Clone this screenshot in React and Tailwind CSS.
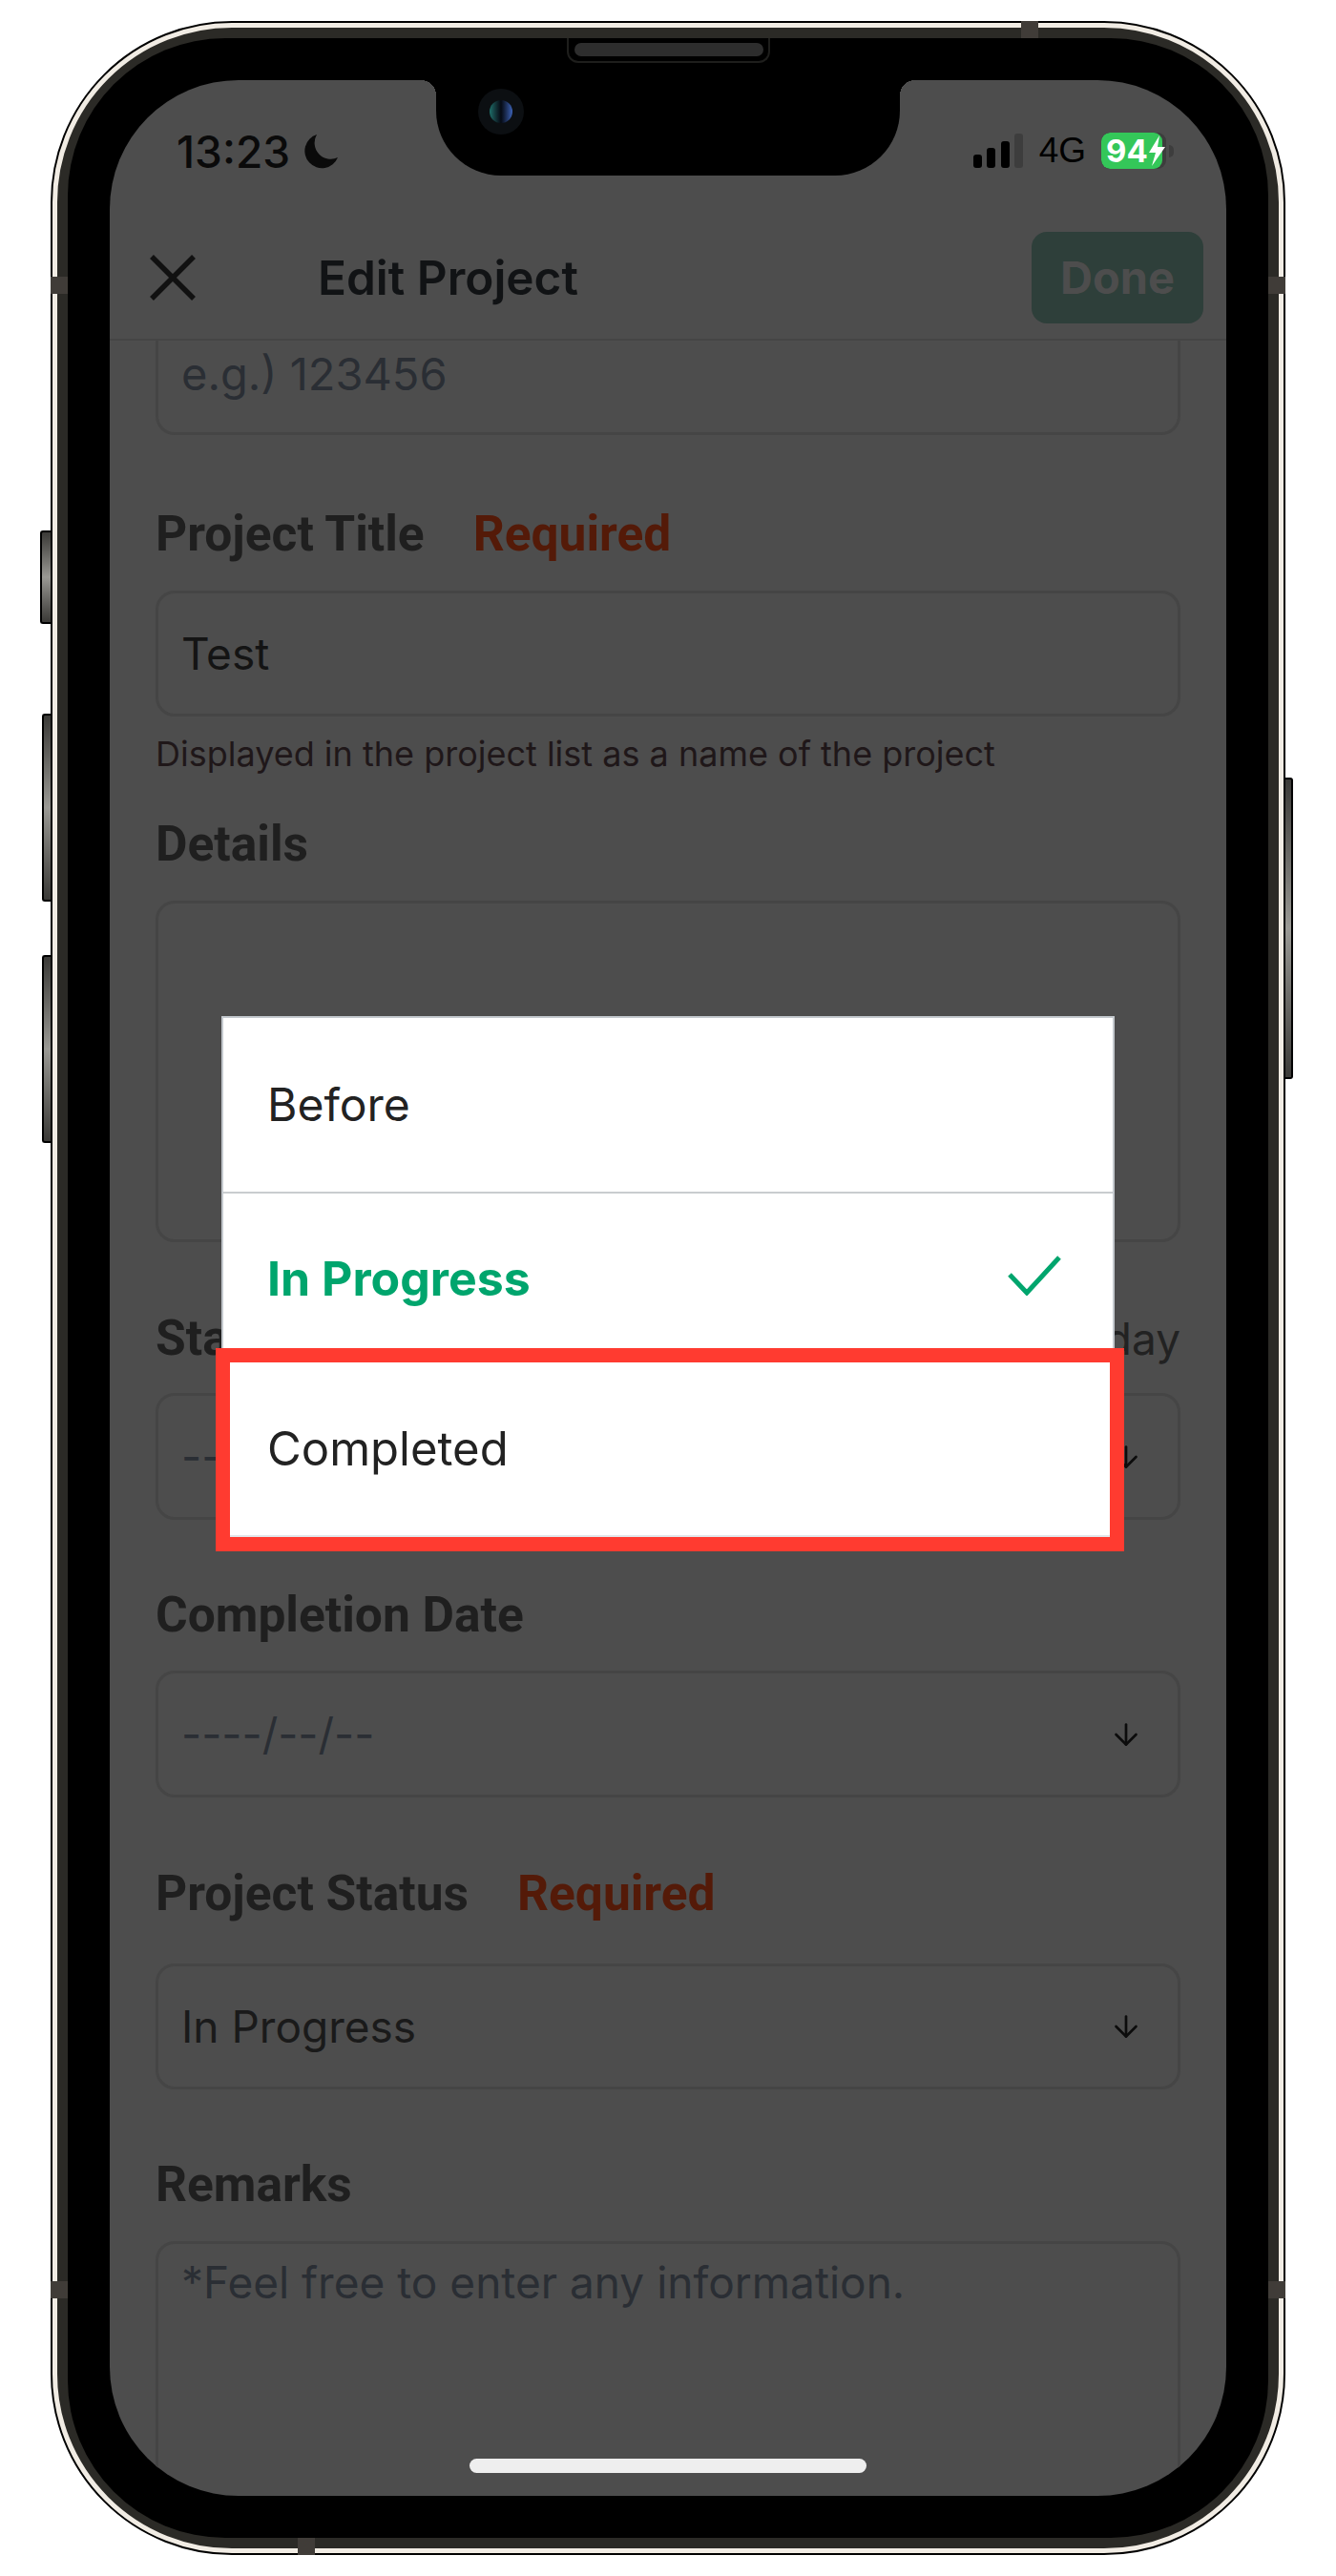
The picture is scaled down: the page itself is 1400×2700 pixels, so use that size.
import { ArrowDown } from 'lucide-react';

const SANS = 'font-["Inter",sans-serif]';

const Field = ({ label, required, right, help, boxClass, children, labelClass, gapClass = 'mt-[31px]' }) => (
  <div>
    <div className={`flex items-baseline justify-between ${labelClass}`}>
      <div className='flex items-baseline gap-[51px] font-["Roboto",sans-serif]'>
        <span className="text-[51.5px] leading-[56px] font-bold text-[#1f1f1f]">{label}</span>
        {required && <span className="text-[51.5px] leading-[56px] font-bold text-[#541a08]">Required</span>}
      </div>
      {right && <span className={`text-[46px] leading-[56px] text-[#222] ${SANS}`}>{right}</span>}
    </div>
    <div className={`${gapClass} flex items-center justify-between rounded-[20px] border-[3px] border-[#454545] pl-[24px] pr-[24px] ${boxClass}`}>
      {children}
    </div>
    {help && <p className={`mt-[17px] text-[36px] leading-[44px] text-[#1f1719] ${SANS}`}>{help}</p>}
  </div>
);

const SideButton = ({ className }) => (
  <div className={`rounded-l-[3px] border-2 border-r-0 border-black bg-gradient-to-b from-[#3b3a37] via-[#9a9994] to-[#3b3a37] ${className}`} />
);

const Chevron = () => <ArrowDown size={36} strokeWidth={1.8} className="mr-[12px] text-[#0c0c0c]" />;

export default function App() {
  return (
    <div className="flex h-[2700px] w-[1400px] justify-start bg-white pt-[22px] pl-[53px]">
      {/* volume / silent buttons */}
      <div className="ml-[-11px] flex w-[11px] flex-col items-end">
        <SideButton className="mt-[534px] h-[98px] w-[11px]" />
        <SideButton className="mt-[94px] h-[197px] w-[9px]" />
        <SideButton className="mt-[56px] h-[197px] w-[9px]" />
      </div>

      <div className="relative h-[2656px] w-[1294px] rounded-[190px] border-2 border-black bg-[#2b2a26]">
        {/* antenna bands */}
        <div className="absolute left-[-2px] top-[266px] h-[18px] w-[18px] bg-[#403c38]" />
        <div className="absolute right-[-2px] top-[266px] h-[18px] w-[18px] bg-[#403c38]" />
        <div className="absolute left-[-2px] top-[2367px] h-[18px] w-[18px] bg-[#403c38]" />
        <div className="absolute right-[-2px] top-[2367px] h-[18px] w-[18px] bg-[#403c38]" />
        <div className="absolute left-[1015px] top-[-2px] h-[18px] w-[18px] bg-[#403c38]" />
        <div className="absolute bottom-[-2px] left-[257px] h-[18px] w-[18px] bg-[#403c38]" />

        <div className="h-full w-full rounded-[188px] border-[5px] border-[#f1ece4] bg-[#2b2a26] p-[11px]">
          <div className="relative h-full w-full rounded-[165px] bg-black px-[44px] py-[44px]">
            {/* speaker */}
            <div className="absolute left-[523px] top-0 flex h-[26px] w-[213px] items-center justify-center rounded-b-[12px] border-2 border-t-0 border-[#1e1e1c] bg-black">
              <div className="h-[14px] w-[198px] rounded-full bg-[#2d2d2d]" />
            </div>

            <div className="relative flex h-[2532px] w-[1170px] flex-col overflow-hidden rounded-[135px] bg-[#4d4d4d]">
              {/* notch */}
              <div className="absolute left-[342px] top-0 h-[100px] w-[486px] rounded-b-[68px] bg-black" />
              <div className="absolute left-[326px] top-0 h-[16px] w-[16px] bg-[radial-gradient(circle_at_0_100%,transparent_16px,black_16px)]" />
              <div className="absolute left-[828px] top-0 h-[16px] w-[16px] bg-[radial-gradient(circle_at_100%_100%,transparent_16px,black_16px)]" />
              <div className="absolute left-[386px] top-[9px] h-[48px] w-[48px] rounded-full bg-[#0c0f12] p-[12px]">
                <div className="h-full w-full rounded-full bg-gradient-to-r from-[#1d6f6a] via-[#060a14] to-[#3d63b8]" />
              </div>

              {/* status bar */}
              <div className={`flex h-[159px] shrink-0 items-start justify-between pl-[70px] pr-[55px] pt-[50px] text-black ${SANS}`}>
                <div className="flex items-center gap-[13px]">
                  <span className="text-[46px] leading-[50px] font-medium text-[#0a0a0a]">13:23</span>
                  <svg width="38" height="38" viewBox="0 0 38 38"><path d="M15 1 A18 18 0 1 0 37 25 A17 17 0 0 1 15 1 Z" fill="#0a0a0a" /></svg>
                </div>
                <div className="mt-[5px] flex items-center">
                  <svg width="52" height="36" viewBox="0 0 52 36">
                    <rect x="0" y="22" width="9" height="14" rx="3" fill="#000" />
                    <rect x="14" y="15" width="9" height="21" rx="3" fill="#000" />
                    <rect x="29" y="8" width="9" height="28" rx="3" fill="#000" />
                    <rect x="43" y="0" width="9" height="36" rx="3" fill="#3d3d3d" />
                  </svg>
                  <span className='ml-[17px] font-["Liberation_Sans",sans-serif] text-[37px] leading-[38px]'>4G</span>
                  <div className="ml-[16px] flex h-[38px] w-[68px] items-center overflow-hidden rounded-[9px] bg-[#3d3d3d]">
                    <div className="flex h-full w-[64px] items-center rounded-[9px] bg-[#34c759] pl-[5px] text-[33px] font-bold leading-[38px] text-white">
                      94
                      <svg className="ml-[1px] shrink-0" width="17" height="32" viewBox="0 0 17 32"><path d="M11 0 L0 18 H7 L3 32 L17 12 H9 Z" fill="#fff" /></svg>
                    </div>
                  </div>
                  <div className="ml-[3px] h-[13px] w-[5px] rounded-r-full bg-[#3d3d3d]" />
                </div>
              </div>

              {/* header */}
              <div className={`flex h-[114px] shrink-0 items-start border-b-2 border-[#454545] pl-[42px] pr-[24px] ${SANS}`}>
                <svg className="mt-[24px] shrink-0" width="48" height="48" viewBox="0 0 48 48">
                  <path d="M2 2 L46 46 M46 2 L2 46" stroke="#111" strokeWidth="5.5" fill="none" />
                </svg>
                <span className="ml-[128px] mt-[19px] text-[49.5px] leading-[58px] font-semibold text-[#111315]">Edit Project</span>
                <div className="ml-auto flex h-[96px] w-[180px] items-center justify-center rounded-[16px] bg-[#2e3f3a] text-[47px] font-bold text-[#4d4d4d]">Done</div>
              </div>

              {/* form */}
              <div className="flex flex-col px-[48px] text-[#1d1d1d]">
                <div className="flex h-[99px] items-center rounded-b-[20px] border-[3px] border-t-0 border-[#454545] pb-[26px] pl-[24px]">
                  <span className={`text-[47px] leading-[56px] text-[#2a2e34] ${SANS}`}>e.g.) 123456</span>
                </div>

                <Field label="Project Title" required labelClass="mt-[76px]" boxClass="h-[132px]" help="Displayed in the project list as a name of the project">
                  <span className={`text-[46px] text-[#141414] ${SANS}`}>Test</span>
                </Field>

                <Field label="Details" labelClass="mt-[45px]" boxClass="h-[358px]" />

                <Field label="Start Date" right="Today" labelClass="mt-[73px]" gapClass="mt-[29px]" boxClass="h-[133px]">
                  <span className={`text-[46px] text-[#2a2e34] ${SANS}`}>----/--/--</span>
                  <Chevron />
                </Field>

                <Field label="Completion Date" labelClass="mt-[72px]" gapClass="mt-[30px]" boxClass="h-[133px]">
                  <span className={`text-[46px] text-[#2a2e34] ${SANS}`}>----/--/--</span>
                  <Chevron />
                </Field>

                <Field label="Project Status" required labelClass="mt-[73px]" gapClass="mt-[45px]" boxClass="h-[132px]">
                  <span className={`text-[46px] text-[#1a1a1a] ${SANS}`}>In Progress</span>
                  <Chevron />
                </Field>

                <Field label="Remarks" labelClass="mt-[72px]" boxClass="h-[400px] items-start">
                  <span className={`self-start pt-[6px] text-[46px] text-[#2a2e34] ${SANS}`}>*Feel free to enter any information.</span>
                </Field>
              </div>

              {/* home indicator */}
              <div className="absolute bottom-[24px] left-[377px] h-[15px] w-[416px] rounded-full bg-[#eeeeee]" />

              {/* status picker dialog */}
              <div className={`absolute left-[117px] top-[981px] flex w-[936px] flex-col border-2 border-b-[3px] border-[#c4c9ce] border-b-[#e2e6ea] bg-white ${SANS}`}>
                <div className="flex h-[182px] items-center px-[46px] text-[48px] text-[#222]">Before</div>
                <div className="flex h-[180px] items-center justify-between border-t-2 border-[#c9cccf] pl-[46px] pr-[54px] text-[50px] font-bold text-[#00a56d]">
                  In Progress
                  <svg className="mt-[-6px]" width="56" height="42" viewBox="0 0 56 42" fill="none"><path d="M2 20 L20 39 L54 2" stroke="#00a56d" strokeWidth="5" /></svg>
                </div>
                <div className="flex h-[180px] items-center px-[46px] text-[49px] text-[#222]">Completed</div>
              </div>

              {/* red highlight */}
              <div className="absolute left-[111px] top-[1329px] h-[213px] w-[952px] border-[15px] border-[#ff3b30]" />
            </div>
          </div>
        </div>
      </div>

      {/* power button */}
      <div className="mt-[793px] h-[316px] w-[8px] rounded-r-[3px] border-2 border-l-0 border-black bg-gradient-to-b from-[#3b3a37] via-[#9a9994] to-[#3b3a37]" />
    </div>
  );
}
